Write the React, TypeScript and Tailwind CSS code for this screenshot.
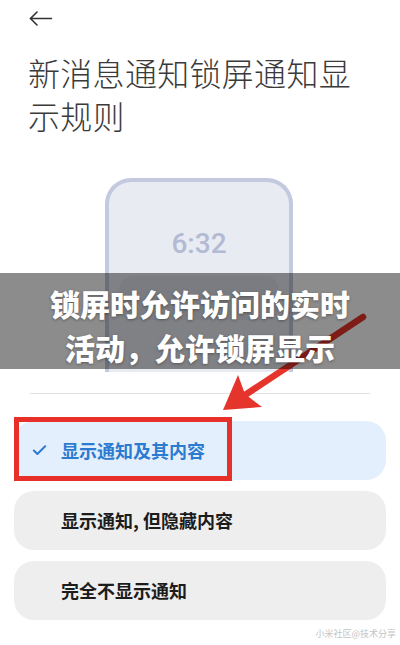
import { Check } from 'lucide-react';

const options = [
  { label: '显示通知及其内容', active: true },
  { label: '显示通知, 但隐藏内容', active: false },
  { label: '完全不显示通知', active: false },
];

export default function App() {
  return (
    <div className="relative w-[400px] h-[645px] overflow-hidden bg-white font-['Noto_Sans_CJK_SC','Noto_Sans',sans-serif]">
      {/* Back */}
      <div className="pt-[11px] pl-[29px]">
        <svg width="24" height="15" viewBox="0 0 24 15" fill="none" stroke="#333" strokeWidth="1.6" strokeLinecap="round" strokeLinejoin="round">
          <path d="M1.5 7.5H22.5" />
          <path d="M8 1L1.5 7.5L8 14" />
        </svg>
      </div>

      {/* Title */}
      <h1 className="mt-[25px] pl-[28px] pr-[40px] text-[32px] leading-[43px] tracking-[0.3px] font-light text-[#3a3a3a]">
        新消息通知锁屏通知显示规则
      </h1>

      {/* Phone preview */}
      <div className="mt-[41px] ml-[105px] w-[188px] h-[194px] rounded-t-[26px] border-[4px] border-b-0 border-[#c3c9de] bg-[#e9ebf3]">
        <div className="pt-[46px] text-center text-[28px] leading-[32px] font-medium text-[#b3bad3] font-['Roboto',sans-serif]">6:32</div>
        <div className="mt-[16px] mx-[10px] h-[44px] rounded-[14px] bg-[#dfe2ec]" />
      </div>

      {/* Divider */}
      <div className="mt-[21px] mx-[30px] h-px bg-[#e3e3e3]" />

      {/* Options */}
      <div className="mt-[27px] px-[14px] flex flex-col gap-[11px]">
        {options.map((o) => (
          <div
            key={o.label}
            className={`h-[59px] rounded-[20px] flex items-center ${o.active ? 'bg-[#e4effd]' : 'bg-[#eeeeee]'}`}
          >
            <div className="w-[47px] pl-[17px]">
              {o.active && <Check size={17} strokeWidth={2.8} className="text-[#2b7bd0]" />}
            </div>
            <span className={`text-[18px] font-semibold ${o.active ? 'text-[#2b7bd0]' : 'text-[#1c1c1c]'}`}>{o.label}</span>
          </div>
        ))}
      </div>

      <div className="mt-[8px] pr-[4px] text-right text-[9px] leading-[12px] text-[#c4c4c4]">小米社区@技术分享</div>

      {/* Red annotation arrow */}
      <svg className="absolute inset-0 pointer-events-none" width="400" height="645" viewBox="0 0 400 645">
        <line x1="363" y1="317" x2="242" y2="397" stroke="#e5342c" strokeWidth="6.5" strokeLinecap="round" />
        <polygon points="223,410 238,375 245,394 262,407" fill="#e5342c" />
      </svg>

      {/* Red highlight box */}
      <div className="absolute left-[14px] top-[417px] w-[218px] h-[64px] border-[5px] border-[#e8302a]" />

      {/* Caption band */}
      <div className="absolute left-0 right-0 top-[273px] h-[96px] bg-black/45 pt-[8px] text-center text-[30px] leading-[44px] font-black text-white [text-shadow:0_1px_3px_rgba(0,0,0,0.35)]">
        <div>锁屏时允许访问的实时</div>
        <div>活动，允许锁屏显示</div>
      </div>
    </div>
  );
}
